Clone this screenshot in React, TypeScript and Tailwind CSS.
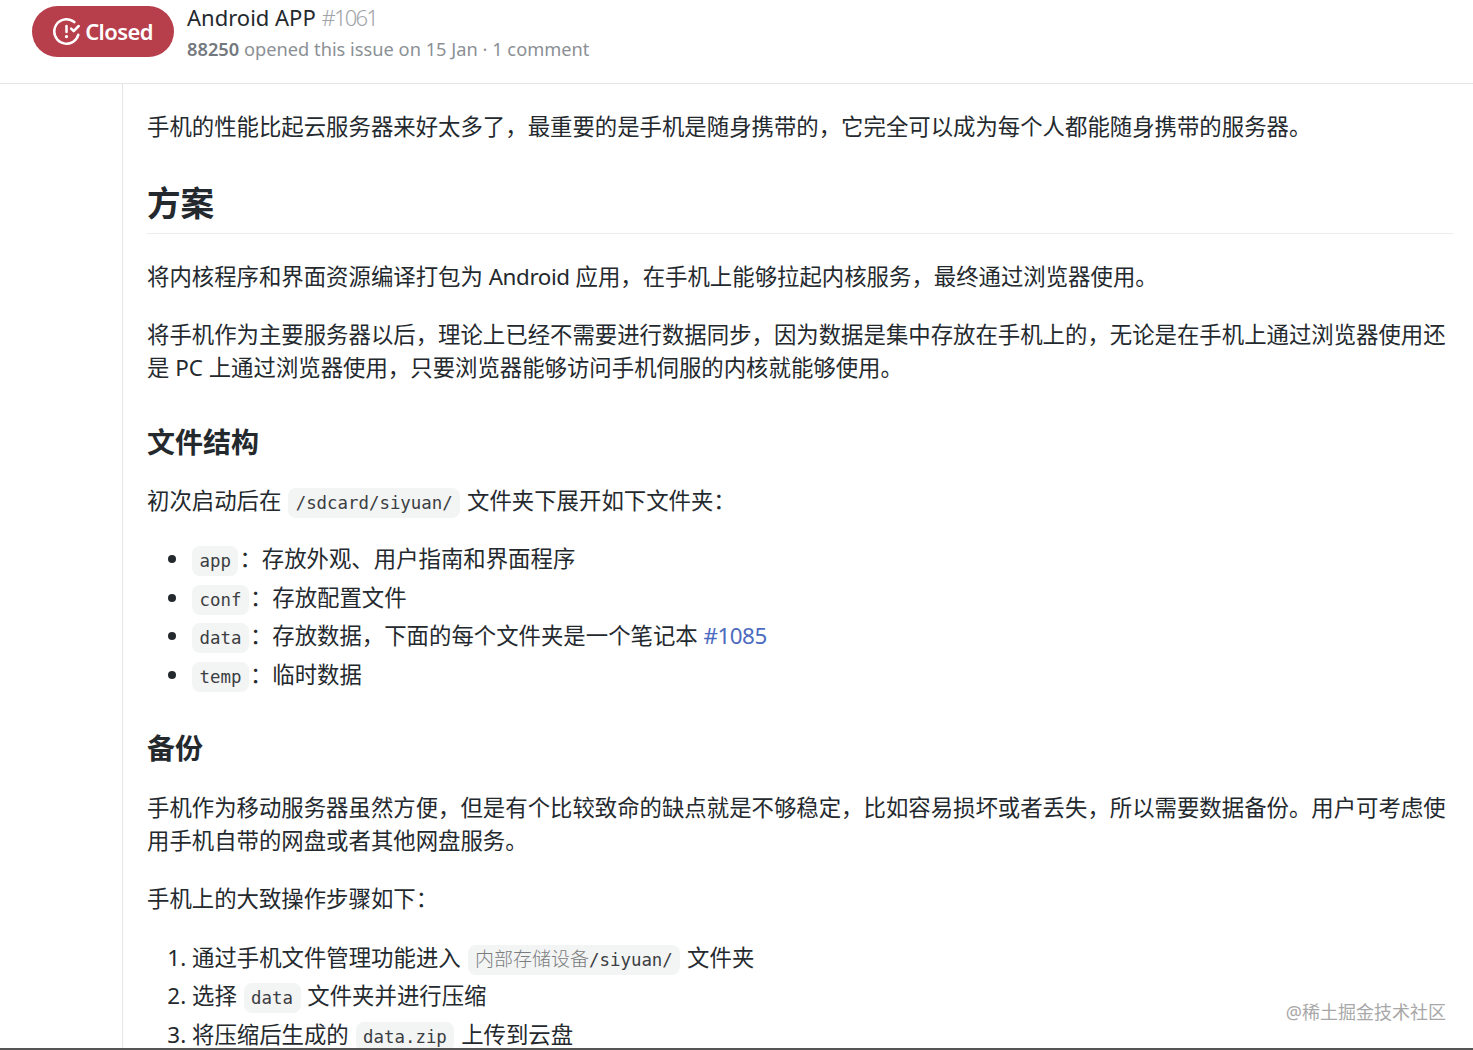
const sans = "font-['Noto_Sans','Noto_Sans_CJK_SC',sans-serif]";

function Code(props: { children: React.ReactNode }) {
    return (
        <code className="bg-[#f3f4f4] rounded-[8px] px-[7.5px] py-[5px] mx-[1px] text-[17.4px] leading-none text-[#3b3e42] font-['DejaVu_Sans_Mono','Noto_Sans_CJK_SC',monospace]">
            {props.children}
        </code>
    );
}

function ClosedIcon() {
    return (
        <svg width="27" height="27" viewBox="0 0 16 16" fill="currentColor">
            <path d="M1.5 8a6.5 6.5 0 0110.65-5.003.75.75 0 00.959-1.153 8 8 0 102.592 8.33.75.75 0 10-1.444-.407A6.5 6.5 0 011.5 8zM8 12a1 1 0 100-2 1 1 0 000 2zm0-8a.75.75 0 01.75.75v3.5a.75.75 0 11-1.5 0v-3.5A.75.75 0 018 4zm4.78 4.28l3-3a.75.75 0 00-1.06-1.06l-2.47 2.47-.97-.97a.749.749 0 10-1.06 1.06l1.5 1.5a.75.75 0 001.06 0z" />
        </svg>
    );
}

function Header() {
    return (
        <header className="h-[84px] shrink-0 border-b border-[#e4e5e6] flex flex-row items-start pl-[32px] pt-[6px] gap-[13px]">
            <span className="flex flex-row items-center justify-center gap-[5px] bg-[#b73e4b] text-white w-[142px] h-[51px] rounded-full text-[22px] font-semibold tracking-[-0.6px]">
                <ClosedIcon />
                Closed
            </span>
            <div className="flex flex-col">
                <p className="text-[22px] leading-[26px] -mt-[2px] text-[#24292e]">
                    Android APP <span className="text-[#a0a4a8] font-light tracking-[-1.8px]">#1061</span>
                </p>
                <p className="text-[18.25px] leading-[26px] mt-[6px] text-[#8b9095]">
                    <span className="font-semibold text-[#73787d]">88250</span> opened this issue on 15 Jan · 1 comment
                </p>
            </div>
        </header>
    );
}

function Content() {
    return (
        <main className="ml-[122px] border-l border-[#e4e5e6] pl-[24px] pr-[20px] flex-1 overflow-hidden text-[22.4px] leading-[33px] text-[#24292e]">
            <p className="mt-[26px]">手机的性能比起云服务器来好太多了，最重要的是手机是随身携带的，它完全可以成为每个人都能随身携带的服务器。</p>

            <h2 className="mt-[37px] h-[54px] pb-[4px] text-[33.6px] leading-[46px] font-bold border-b border-[#eaecef]">方案</h2>
            <p className="mt-[26px]">将内核程序和界面资源编译打包为 <span className="tracking-[-0.4px]">Android</span> 应用，在手机上能够拉起内核服务，最终通过浏览器使用。</p>
            <p className="mt-[25px]">将手机作为主要服务器以后，理论上已经不需要进行数据同步，因为数据是集中存放在手机上的，无论是在手机上通过浏览器使用还是 PC 上通过浏览器使用，只要浏览器能够访问手机伺服的内核就能够使用。</p>

            <h3 className="mt-[38px] text-[28px] leading-[40px] font-bold">文件结构</h3>
            <p className="mt-[22px]">初次启动后在 <Code>/sdcard/siyuan/</Code> 文件夹下展开如下文件夹：</p>

            <ul className="mt-[25px] pl-[44px] list-disc flex flex-col gap-[5.6px]">
                <li><Code>app</Code>：存放外观、用户指南和界面程序</li>
                <li><Code>conf</Code>：存放配置文件</li>
                <li><Code>data</Code>：存放数据，下面的每个文件夹是一个笔记本 <span className="text-[#4c6bc0] tracking-[-0.5px]">#1085</span></li>
                <li><Code>temp</Code>：临时数据</li>
            </ul>

            <h3 className="mt-[37px] text-[28px] leading-[40px] font-bold">备份</h3>
            <p className="mt-[23px]">手机作为移动服务器虽然方便，但是有个比较致命的缺点就是不够稳定，比如容易损坏或者丢失，所以需要数据备份。用户可考虑使用手机自带的网盘或者其他网盘服务。</p>
            <p className="mt-[25px]">手机上的大致操作步骤如下：</p>

            <ol className="mt-[26px] pl-[45px] list-decimal flex flex-col gap-[5.6px]">
                <li>通过手机文件管理功能进入 <Code><span className="text-[19px] font-light text-[#7a7d80]">内部存储设备</span>/siyuan/</Code> 文件夹</li>
                <li>选择 <Code>data</Code> 文件夹并进行压缩</li>
                <li>将压缩后生成的 <Code>data.zip</Code> 上传到云盘</li>
            </ol>
        </main>
    );
}

export default function App() {
    return (
        <div className={`relative flex flex-col w-[1473px] h-[1050px] overflow-hidden bg-white ${sans}`}>
            <Header />
            <Content />
            <div className="h-[2px] shrink-0 bg-[#555555]"></div>
            {/* juejin watermark */}
            <span className="absolute right-[27px] bottom-[26px] text-[18px] leading-[24px] text-[#a8a8a8]">@稀土掘金技术社区</span>
        </div>
    );
}
